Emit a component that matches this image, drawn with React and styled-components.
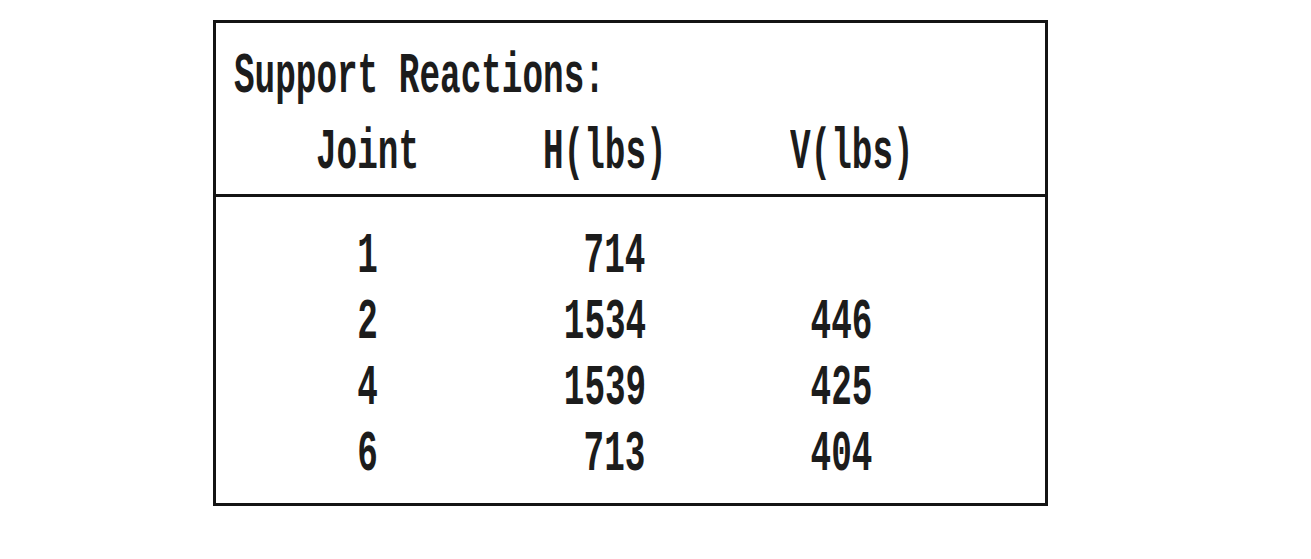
import React from "react";
import styled, { createGlobalStyle } from "styled-components";

const CELL = 20.6;
const COLS = 31;
const FONT = 58;
const SCALE = CELL / (FONT * 0.6);

const Global = createGlobalStyle`
  html, body {
    margin: 0;
    padding: 0;
    background: #ffffff;
    overflow: hidden;
  }
  body {
    font-family: "Liberation Mono", "DejaVu Sans Mono", monospace;
    color: #1c1c1c;
  }
`;

const Page = styled.div`
  width: 1311px;
  height: 559px;
  padding: 20px 0 0 213px;
  box-sizing: border-box;
`;

const Card = styled.section`
  width: 835px;
  height: 486px;
  box-sizing: border-box;
  border: 3px solid #141414;
  display: flex;
  flex-direction: column;
`;

const HeaderBlock = styled.header`
  padding: 20.5px 0 8.5px 18px;
  border-bottom: 3px solid #141414;
  display: flex;
  flex-direction: column;
  gap: 10px;
`;

const BodyBlock = styled.div`
  padding: 26.5px 0 0 18px;
  display: flex;
  flex-direction: column;
`;

const CharGrid = styled.div`
  display: grid;
  grid-template-columns: repeat(${COLS}, ${CELL}px);
  height: 66px;
  line-height: 66px;
  font-size: ${FONT}px;
  font-weight: bold;
  white-space: pre;
`;

const Cell = styled.div`
  grid-column: ${(p) => p.$from} / ${(p) => p.$to};
  text-align: ${(p) => (p.$right ? "right" : "left")};
  min-width: 0;
`;

const Glyphs = styled.span`
  display: inline-block;
  transform: scaleX(${SCALE});
  transform-origin: ${(p) => (p.$right ? "right" : "left")} center;
`;

function Text({ from, to, right, children }) {
  return (
    <Cell $from={from} $to={to} $right={right}>
      <Glyphs $right={right}>{children}</Glyphs>
    </Cell>
  );
}

const rows = [
  { joint: "1", h: "714", v: "" },
  { joint: "2", h: "1534", v: "446" },
  { joint: "4", h: "1539", v: "425" },
  { joint: "6", h: "713", v: "404" },
];

export default function App() {
  return (
    <Page>
      <Global />
      <Card>
        <HeaderBlock>
          <CharGrid>
            <Text from={1} to={COLS + 1}>Support Reactions:</Text>
          </CharGrid>
          <CharGrid>
            <Text from={5} to={14}>Joint</Text>
            <Text from={16} to={26}>H(lbs)</Text>
            <Text from={28} to={COLS + 1}>V(lbs)</Text>
          </CharGrid>
        </HeaderBlock>
        <BodyBlock>
          {rows.map((r) => (
            <CharGrid key={r.joint}>
              <Text from={1} to={8} right>{r.joint}</Text>
              <Text from={8} to={21} right>{r.h}</Text>
              <Text from={21} to={32} right>{r.v}</Text>
            </CharGrid>
          ))}
        </BodyBlock>
      </Card>
    </Page>
  );
}
